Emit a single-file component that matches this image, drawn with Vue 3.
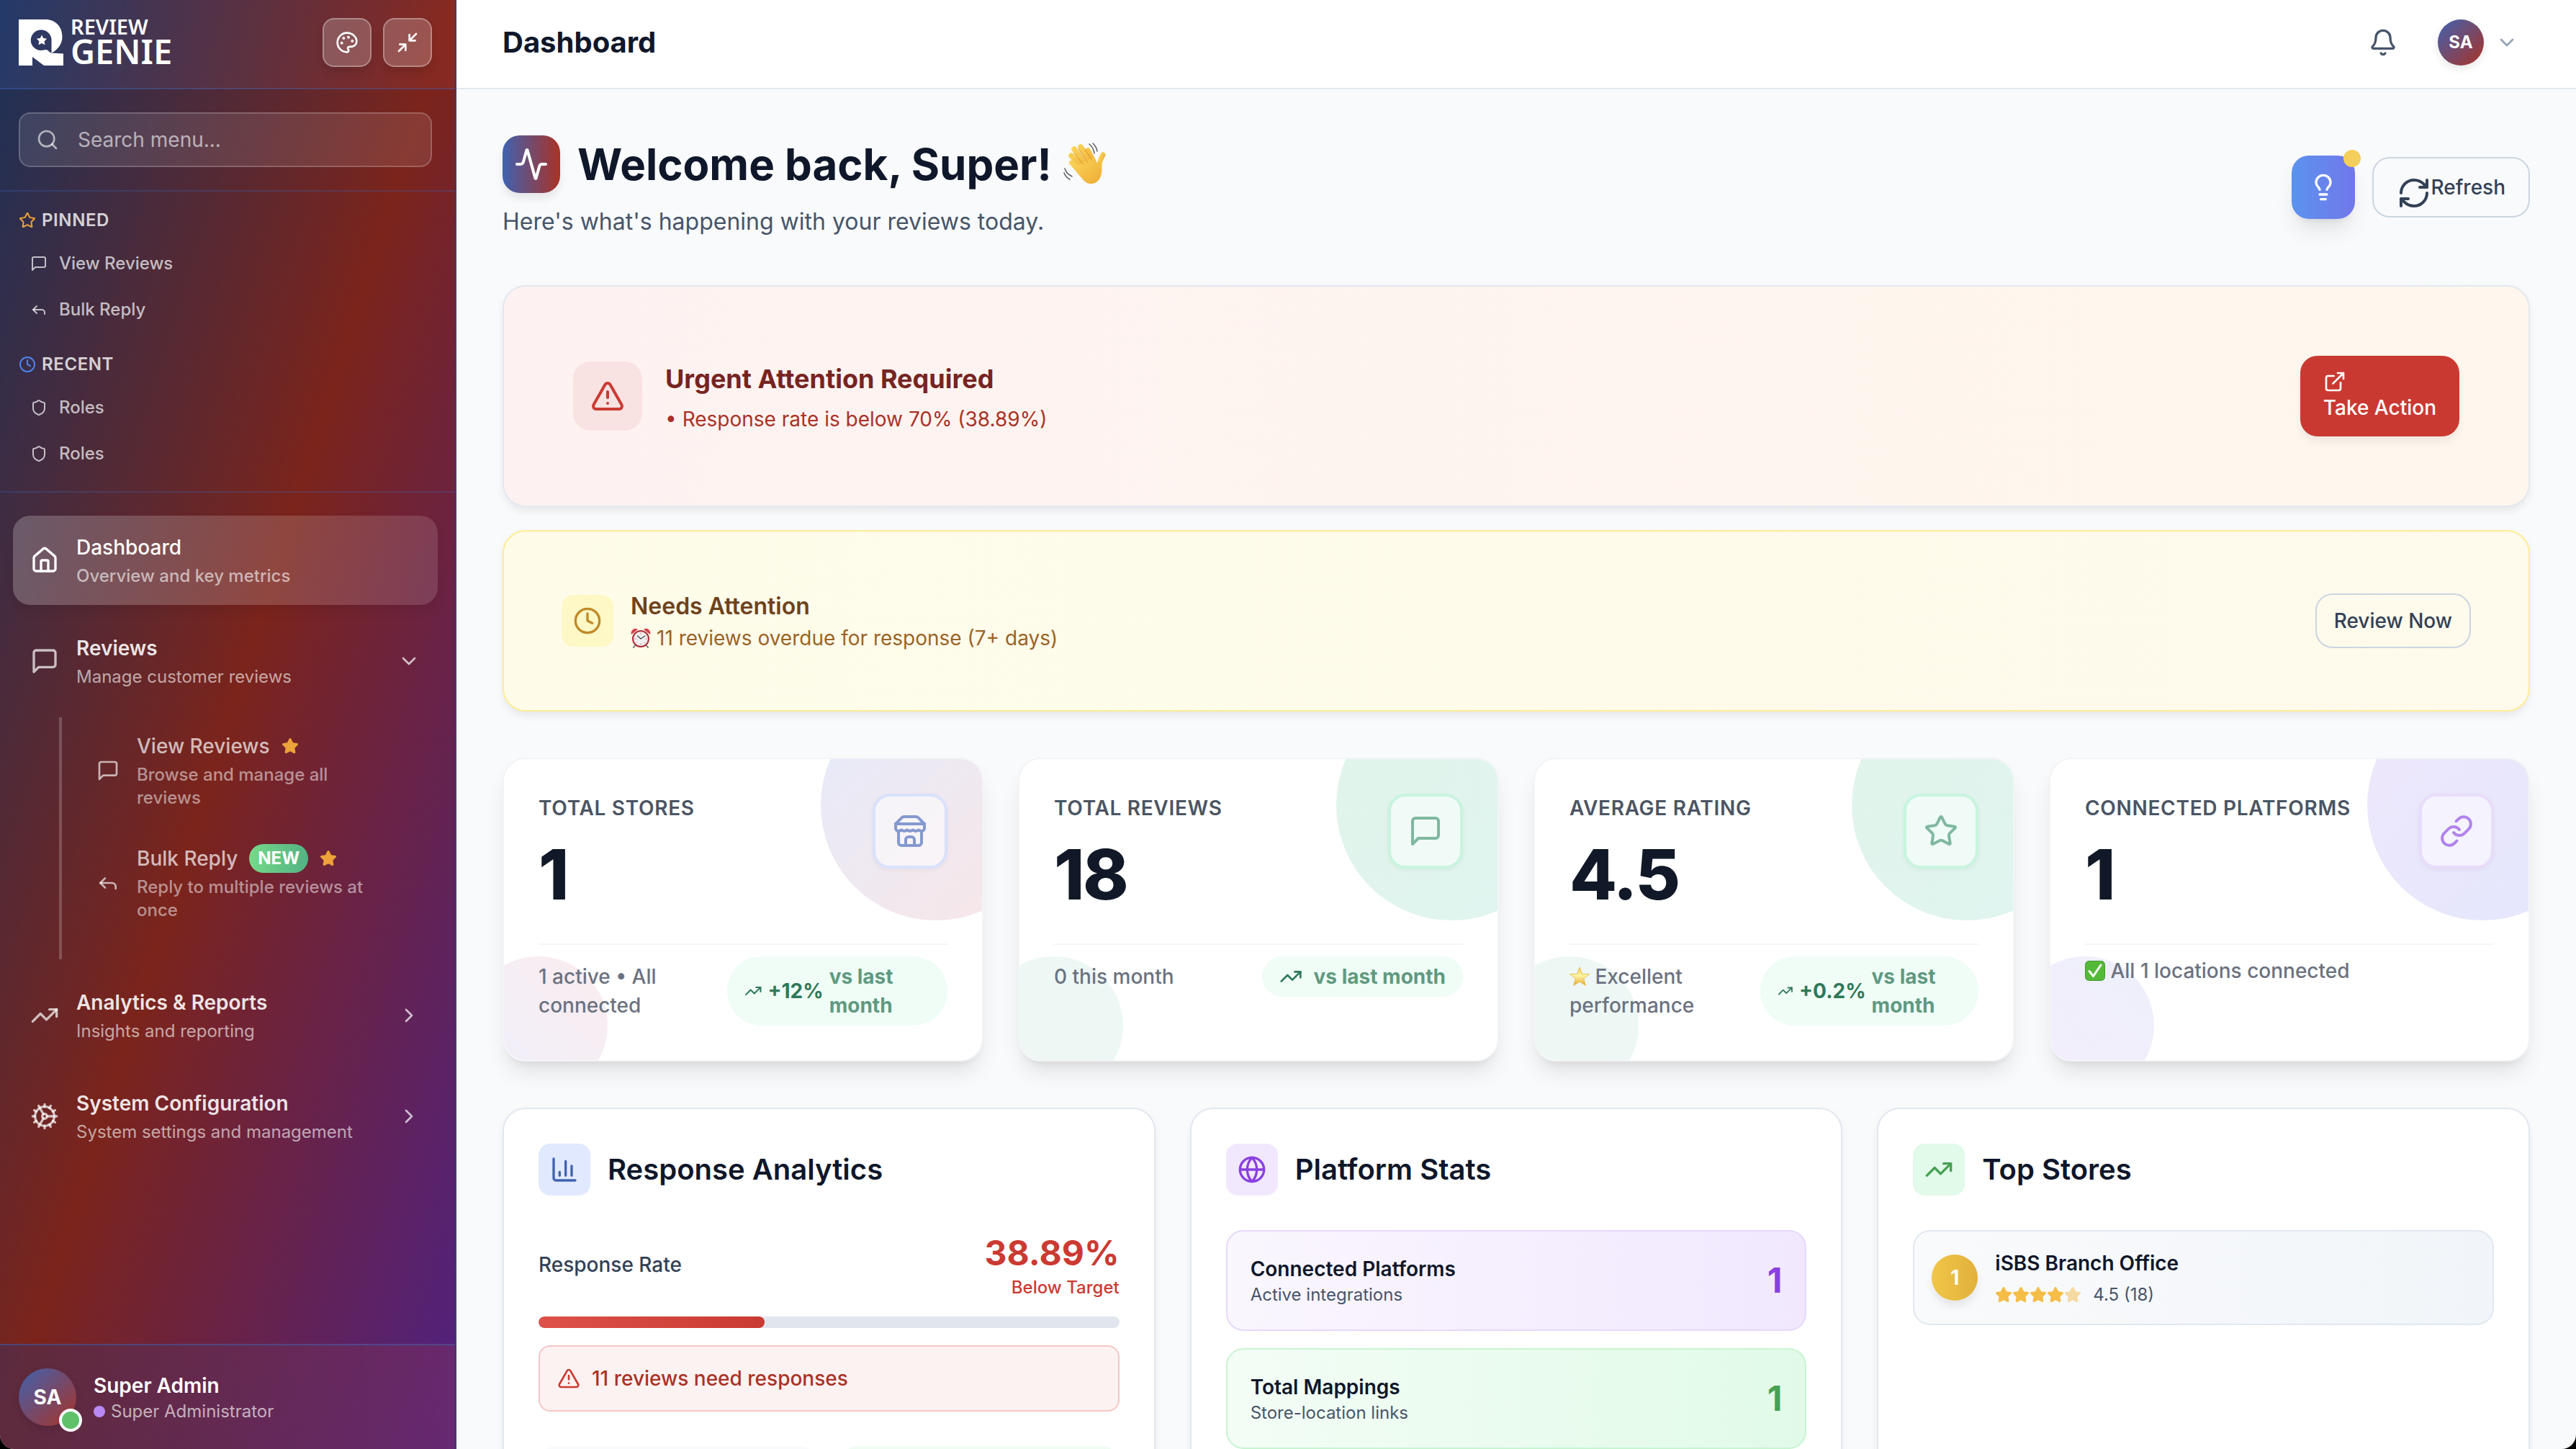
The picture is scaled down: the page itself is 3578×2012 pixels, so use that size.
<script setup>
import { h, ref } from 'vue'

const glyphs = {
  palette: '<circle cx="13.5" cy="6.5" r=".5" fill="currentColor"/><circle cx="17.5" cy="10.5" r=".5" fill="currentColor"/><circle cx="8.5" cy="7.5" r=".5" fill="currentColor"/><circle cx="6.5" cy="12.5" r=".5" fill="currentColor"/><path d="M12 2C6.5 2 2 6.5 2 12s4.5 10 10 10c.926 0 1.648-.746 1.648-1.688 0-.437-.18-.835-.437-1.125-.29-.289-.438-.652-.438-1.125a1.64 1.64 0 0 1 1.668-1.668h1.996c3.051 0 5.555-2.503 5.555-5.554C21.965 6.012 17.461 2 12 2z"/>',
  minimize: '<path d="M4 14h6v6M20 10h-6V4M14 10l7-7M3 21l7-7"/>',
  search: '<circle cx="11" cy="11" r="8"/><path d="m21 21-4.3-4.3"/>',
  star: '<path d="M11.525 2.295a.53.53 0 0 1 .95 0l2.31 4.679a2.123 2.123 0 0 0 1.595 1.16l5.166.756a.53.53 0 0 1 .294.904l-3.736 3.638a2.123 2.123 0 0 0-.611 1.878l.882 5.14a.53.53 0 0 1-.771.56l-4.618-2.428a2.122 2.122 0 0 0-1.973 0L6.396 21.01a.53.53 0 0 1-.77-.56l.881-5.139a2.122 2.122 0 0 0-.611-1.879L2.16 9.795a.53.53 0 0 1 .294-.906l5.165-.755a2.122 2.122 0 0 0 1.597-1.16z"/>',
  message: '<path d="M21 15a2 2 0 0 1-2 2H7l-4 4V5a2 2 0 0 1 2-2h14a2 2 0 0 1 2 2z"/>',
  reply: '<path d="M9 17l-5-5 5-5"/><path d="M20 18v-2a4 4 0 0 0-4-4H4"/>',
  clock: '<circle cx="12" cy="12" r="10"/><path d="M12 6v6l4 2"/>',
  shield: '<path d="M20 13c0 5-3.5 7.5-7.66 8.95a1 1 0 0 1-.67-.01C7.5 20.5 4 18 4 13V6a1 1 0 0 1 1-1c2 0 4.5-1.2 6.24-2.72a1.17 1.17 0 0 1 1.52 0C14.51 3.81 17 5 19 5a1 1 0 0 1 1 1z"/>',
  home: '<path d="M15 21v-8a1 1 0 0 0-1-1h-4a1 1 0 0 0-1 1v8"/><path d="M3 10a2 2 0 0 1 .709-1.528l7-5.999a2 2 0 0 1 2.582 0l7 5.999A2 2 0 0 1 21 10v9a2 2 0 0 1-2 2H5a2 2 0 0 1-2-2z"/>',
  trend: '<path d="M22 7l-8.500 8.500-5-5L2 17"/><path d="M16 7h6v6"/>',
  cog: '<path d="M12 20a8 8 0 1 0 0-16 8 8 0 0 0 0 16Z"/><path d="M12 14a2 2 0 1 0 0-4 2 2 0 0 0 0 4Z"/><path d="M12 2v2M12 22v-2M17 20.66l-1-1.73M11 10.27 7 3.34M20.66 17l-1.73-1M3.34 7l1.73 1M14 12h8M2 12h2M20.66 7l-1.73 1M3.34 17l1.73-1M17 3.34l-1 1.73M11 13.73l-4 6.930"/>',
  down: '<path d="m6 9 6 6 6-6"/>',
  right: '<path d="m9 18 6-6-6-6"/>',
  bell: '<path d="M10.268 21a2 2 0 0 0 3.464 0"/><path d="M3.262 15.326A1 1 0 0 0 4 17h16a1 1 0 0 0 .74-1.673C19.41 13.956 18 12.499 18 8A6 6 0 0 0 6 8c0 4.499-1.411 5.956-2.738 7.326"/>',
  activity: '<path d="M22 12h-2.480a2 2 0 0 0-1.930 1.460l-2.350 8.360a.25.25 0 0 1-.48 0L9.240 2.180a.25.25 0 0 0-.48 0l-2.350 8.360A2 2 0 0 1 4.490 12H2"/>',
  bulb: '<path d="M15 14c.2-1 .7-1.700 1.500-2.500 1-.9 1.500-2.200 1.500-3.500A6 6 0 0 0 6 8c0 1 .2 2.200 1.500 3.500.7.7 1.300 1.500 1.500 2.500"/><path d="M9 18h6M10 22h4"/>',
  refresh: '<path d="M3 12a9 9 0 0 1 9-9 9.750 9.750 0 0 1 6.740 2.740L21 8"/><path d="M21 3v5h-5"/><path d="M21 12a9 9 0 0 1-9 9 9.750 9.750 0 0 1-6.740-2.740L3 16"/><path d="M8 16H3v5"/>',
  external: '<path d="M15 3h6v6M10 14 21 3"/><path d="M18 13v6a2 2 0 0 1-2 2H5a2 2 0 0 1-2-2V8a2 2 0 0 1 2-2h6"/>',
  alert: '<path d="m21.730 18-8-14a2 2 0 0 0-3.480 0l-8 14A2 2 0 0 0 4 21h16a2 2 0 0 0 1.730-3"/><path d="M12 9v4M12 17h.01"/>',
  store: '<path d="m2 7 4.410-4.410A2 2 0 0 1 7.830 2h8.340a2 2 0 0 1 1.420.59L22 7"/><path d="M4 12v8a2 2 0 0 0 2 2h12a2 2 0 0 0 2-2v-8"/><path d="M15 22v-4a2 2 0 0 0-2-2h-2a2 2 0 0 0-2 2v4"/><path d="M2 7h20"/><path d="M22 7v3a2 2 0 0 1-2 2a2.700 2.700 0 0 1-1.590-.63.7.7 0 0 0-.82 0A2.700 2.700 0 0 1 16 12a2.700 2.700 0 0 1-1.590-.63.7.7 0 0 0-.82 0A2.700 2.700 0 0 1 12 12a2.700 2.700 0 0 1-1.590-.63.7.7 0 0 0-.82 0A2.700 2.700 0 0 1 8 12a2.700 2.700 0 0 1-1.590-.63.7.7 0 0 0-.82 0A2.700 2.700 0 0 1 4 12a2 2 0 0 1-2-2V7"/>',
  link: '<path d="M10 13a5 5 0 0 0 7.540.54l3-3a5 5 0 0 0-7.070-7.070l-1.720 1.710"/><path d="M14 11a5 5 0 0 0-7.540-.54l-3 3a5 5 0 0 0 7.070 7.070l1.710-1.710"/>',
  chart: '<path d="M3 3v16a2 2 0 0 0 2 2h16"/><path d="M18 17V9M13 17V5M8 17v-3"/>',
  globe: '<circle cx="12" cy="12" r="10"/><path d="M12 2a14.500 14.500 0 0 0 0 20 14.500 14.500 0 0 0 0-20M2 12h20"/>'
}

const Icon = (props) =>
  h('svg', {
    viewBox: '0 0 24 24',
    width: props.size,
    height: props.size,
    fill: props.filled ? 'currentColor' : 'none',
    stroke: 'currentColor',
    'stroke-width': 2,
    'stroke-linecap': 'round',
    'stroke-linejoin': 'round',
    'aria-hidden': 'true',
    innerHTML: glyphs[props.name]
  })
Icon.props = { name: String, size: Number, filled: Boolean }

const query = ref('')

const pinned = [
  { icon: 'message', label: 'View Reviews' },
  { icon: 'reply', label: 'Bulk Reply' }
]
const recent = [
  { icon: 'shield', label: 'Roles' },
  { icon: 'shield', label: 'Roles' }
]
const subItems = [
  { icon: 'message', label: 'View Reviews', note: 'Browse and manage all reviews' },
  { icon: 'reply', label: 'Bulk Reply', note: 'Reply to multiple reviews at once', badge: 'NEW' }
]
const groups = [
  { icon: 'trend', label: 'Analytics & Reports', note: 'Insights and reporting' },
  { icon: 'cog', label: 'System Configuration', note: 'System settings and management' }
]
const stats = [
  { tone: 'brand', icon: 'store', label: 'Total Stores', value: '1', note: '1 active • All connected', change: '+12%', trend: true },
  { tone: 'green', icon: 'message', label: 'Total Reviews', value: '18', note: '0 this month', change: '', trend: true },
  { tone: 'green', icon: 'star', label: 'Average Rating', value: '4.5', note: 'Excellent performance', emoji: 'star', change: '+0.2%', trend: true },
  { tone: 'violet', icon: 'link', label: 'Connected Platforms', value: '1', note: 'All 1 locations connected', emoji: 'check' }
]
const platformRows = [
  { tone: 'violet', label: 'Connected Platforms', note: 'Active integrations', value: 1 },
  { tone: 'green', label: 'Total Mappings', note: 'Store-location links', value: 1 }
]
const responseRate = 38.89
</script>

<template>
  <div class="shell">
    <aside class="sidebar">
      <div class="brand-bar">
        <a href="#" class="logo" aria-label="Review Genie">
          <svg class="logo-mark" viewBox="0 0 62 64" width="62" height="64" aria-hidden="true">
            <path fill="#fff" fill-rule="evenodd" d="M0 0H37C51 0 60.500 10 60.500 24C60.500 34 54.500 42 45.500 46.500L62 47.500V64H35L19 52V64H0ZM31 14.500A14.200 14.200 0 0 0 31 43C34 43 35.500 42 38 42C41 42 42 46 45.500 46.500V28.500A14.300 14.300 0 0 0 31 14.500Z" />
            <path fill="#fff" d="M32 21.500l2.200 4.600 5 .7-3.600 3.500.9 5-4.500-2.400-4.500 2.400.9-5-3.600-3.500 5-.7z" />
          </svg>
          <span class="logo-words"><span class="logo-top">REVIEW</span><span class="logo-bottom">GENIE</span></span>
        </a>
        <div class="brand-actions">
          <button type="button" class="glass-btn" aria-label="Theme"><Icon name="palette" :size="32" /></button>
          <button type="button" class="glass-btn" aria-label="Collapse menu"><Icon name="minimize" :size="32" /></button>
        </div>
      </div>

      <div class="search-area">
        <label class="search-box">
          <Icon name="search" :size="32" />
          <input v-model="query" type="text" placeholder="Search menu..." aria-label="Search menu" />
        </label>
      </div>

      <div class="quick">
        <section>
          <h2 class="quick-title"><Icon name="star" :size="24" class="amber" />PINNED</h2>
          <ul class="quick-list">
            <li v-for="(p, i) in pinned" :key="i"><a href="#"><Icon :name="p.icon" :size="24" />{{ p.label }}</a></li>
          </ul>
        </section>
        <section>
          <h2 class="quick-title"><Icon name="clock" :size="24" class="blue" />RECENT</h2>
          <ul class="quick-list">
            <li v-for="(p, i) in recent" :key="i"><a href="#"><Icon :name="p.icon" :size="24" />{{ p.label }}</a></li>
          </ul>
        </section>
      </div>

      <nav class="nav">
        <a href="#" class="nav-item active" aria-current="page">
          <Icon name="home" :size="40" />
          <span class="nav-text"><span class="nav-label">Dashboard</span><span class="nav-note">Overview and key metrics</span></span>
        </a>
        <button type="button" class="nav-item" aria-expanded="true">
          <Icon name="message" :size="40" />
          <span class="nav-text"><span class="nav-label">Reviews</span><span class="nav-note">Manage customer reviews</span></span>
          <Icon name="down" :size="32" />
        </button>
        <div class="subnav">
          <a v-for="s in subItems" :key="s.label" href="#" class="sub-item">
            <Icon :name="s.icon" :size="32" />
            <span class="nav-text">
              <span class="sub-label">{{ s.label }}<span v-if="s.badge" class="badge">{{ s.badge }}</span><Icon name="star" :size="24" filled class="amber" /></span>
              <span class="sub-note">{{ s.note }}</span>
            </span>
          </a>
        </div>
        <button v-for="g in groups" :key="g.label" type="button" class="nav-item" aria-expanded="false">
          <Icon :name="g.icon" :size="40" />
          <span class="nav-text"><span class="nav-label">{{ g.label }}</span><span class="nav-note">{{ g.note }}</span></span>
          <Icon name="right" :size="32" />
        </button>
      </nav>

      <div class="account">
        <div class="avatar large">SA<span class="online"></span></div>
        <div>
          <div class="account-name">Super Admin</div>
          <div class="account-role"><span class="role-dot"></span>Super Administrator</div>
        </div>
      </div>
    </aside>

    <div class="page">
      <header class="topbar">
        <div class="topbar-title">Dashboard</div>
        <div class="topbar-right">
          <button type="button" class="bare bell" aria-label="Notifications"><Icon name="bell" :size="40" /></button>
          <button type="button" class="bare user" aria-label="Account menu">
            <span class="avatar">SA</span>
            <Icon name="down" :size="32" />
          </button>
        </div>
      </header>

      <main class="content">
        <div class="welcome">
          <div>
            <h1 class="welcome-title">
              <span class="welcome-icon"><Icon name="activity" :size="48" /></span>
              <span>Welcome back, Super!</span>
              <svg class="wave" viewBox="0 0 60 60" width="60" height="60" role="img" aria-label="Waving hand">
                <defs>
                  <linearGradient id="skin" x1="0" y1="0" x2="1" y2="1"><stop offset="0" stop-color="#fbd75c" /><stop offset="1" stop-color="#efac35" /></linearGradient>
                </defs>
                <g stroke="url(#skin)" stroke-linecap="round" fill="none">
                  <path stroke-width="7.500" d="M25 34L11 18M30 30L15 9M37 27L24 6M42 27L34 11" />
                  <path stroke-width="7" d="M49 36C49 29 51 24 55 17" />
                </g>
                <path fill="url(#skin)" d="M21 31L41 21C43 24 45 28 47 28L53 26C54 38 54 47 48 53C41 60 32 58 26 50L8 29C7 25 11 23 14 26Z" />
                <path d="M28 31L15 15M34 28L21 9M40 25L30 9" fill="none" stroke="#dc9328" stroke-width="1" stroke-linecap="round" />
                <g fill="none" stroke="#5c5c5c" stroke-width="1.500" stroke-linecap="round">
                  <path d="M36 2Q42 7 43 15M41 1Q46 6 47 12M2 36Q4 43 12 47M1 42Q3 48 9 51" />
                </g>
              </svg>
            </h1>
            <p class="welcome-sub">Here's what's happening with your reviews today.</p>
          </div>
          <div class="welcome-actions">
            <button type="button" class="tip-btn" aria-label="Tips"><Icon name="bulb" :size="40" /><span class="tip-dot"></span></button>
            <button type="button" class="outline-btn refresh"><Icon name="refresh" :size="48" />Refresh</button>
          </div>
        </div>

        <div class="alerts">
          <section class="alert urgent">
            <span class="alert-icon"><Icon name="alert" :size="48" /></span>
            <div class="alert-text">
              <h2>Urgent Attention Required</h2>
              <p>• Response rate is below 70% (38.89%)</p>
            </div>
            <button type="button" class="action-btn"><Icon name="external" :size="32" />Take Action</button>
          </section>
          <section class="alert notice">
            <span class="alert-icon"><Icon name="clock" :size="40" /></span>
            <div class="alert-text">
              <h2>Needs Attention</h2>
              <p>
                <svg class="inline-emoji" viewBox="0 0 28 28" width="28" height="28" role="img" aria-label="Alarm clock">
                  <path d="M8 22l-4 5M20 22l4 5" stroke="#777" stroke-width="2" stroke-linecap="round" />
                  <path d="M1 9A6 6 0 0 1 10 2Z M27 9A6 6 0 0 0 18 2Z" fill="#d5424b" />
                  <circle cx="14" cy="15" r="11" fill="#f1efef" stroke="#a92f3a" stroke-width="2" />
                  <path d="M14 15L9.500 11M14 15L20 11" stroke="#444" stroke-width="1.200" stroke-linecap="round" />
                  <path d="M14 6.500v2M14 21.500v2M5.500 15h2M20.500 15h2M8 21l1-1M19 20l1 1" stroke="#c77b80" stroke-width="1" />
                </svg>
                <span>11 reviews overdue for response (7+ days)</span>
              </p>
            </div>
            <button type="button" class="outline-btn">Review Now</button>
          </section>
        </div>

        <div class="stats">
          <article v-for="s in stats" :key="s.label" class="stat" :class="s.tone">
            <span class="blob blob-top"></span>
            <span class="blob blob-bottom"></span>
            <div class="stat-head">
              <div>
                <h3 class="stat-label">{{ s.label }}</h3>
                <div class="stat-value">{{ s.value }}</div>
              </div>
              <span class="stat-icon"><Icon :name="s.icon" :size="48" /></span>
            </div>
            <div class="stat-foot">
              <div class="stat-note">
                <svg v-if="s.emoji === 'star'" class="text-emoji" viewBox="0 0 28 28" width="28" height="28" role="img" aria-label="Star">
                  <defs><linearGradient id="gold" x1="0" y1="0" x2="0" y2="1"><stop offset="0" stop-color="#f6c945" /><stop offset=".45" stop-color="#fdf6a8" /><stop offset="1" stop-color="#eda62c" /></linearGradient></defs>
                  <path fill="url(#gold)" stroke="#e9b23c" stroke-width=".8" stroke-linejoin="round" d="M14 1l3.500 9.300 9.900.4-7.700 6.200 2.600 9.600-8.300-5.400-8.300 5.400 2.600-9.600L.6 10.700l9.900-.4z" />
                </svg>
                <svg v-if="s.emoji === 'check'" class="text-emoji" viewBox="0 0 28 28" width="28" height="28" role="img" aria-label="Done">
                  <rect x=".5" y=".5" width="27" height="27" rx="5" fill="#54b936" stroke="#3f9a35" />
                  <path d="M6 14.500l5.500 7L22 6" fill="none" stroke="#fff" stroke-width="3" stroke-linecap="round" stroke-linejoin="round" />
                </svg>
                {{ s.note }}
              </div>
              <div v-if="s.trend" class="pill" :class="{ spaced: !s.change }">
                <Icon name="trend" :size="32" />
                <span v-if="s.change">{{ s.change }}</span>
                <span class="pill-note">vs last month</span>
              </div>
            </div>
          </article>
        </div>

        <div class="panels">
          <section class="panel">
            <h2 class="panel-title"><span class="panel-icon brand"><Icon name="chart" :size="40" /></span>Response Analytics</h2>
            <div class="rate">
              <span class="rate-label">Response Rate</span>
              <div class="rate-side">
                <div class="rate-value">{{ responseRate }}%</div>
                <div class="rate-state">Below Target</div>
              </div>
            </div>
            <div class="bar" role="progressbar" aria-label="Response rate" :aria-valuenow="responseRate" aria-valuemin="0" aria-valuemax="100">
              <div class="bar-fill" :style="{ width: responseRate + '%' }"></div>
            </div>
            <div class="need"><Icon name="alert" :size="32" /><span>11 reviews need responses</span></div>
            <div class="tiles"><div class="tile gray"></div><div class="tile mint"></div></div>
          </section>

          <section class="panel">
            <h2 class="panel-title"><span class="panel-icon violet"><Icon name="globe" :size="40" /></span>Platform Stats</h2>
            <div class="rows">
              <div v-for="r in platformRows" :key="r.label" class="row" :class="r.tone">
                <div>
                  <div class="row-label">{{ r.label }}</div>
                  <div class="row-note">{{ r.note }}</div>
                </div>
                <div class="row-value">{{ r.value }}</div>
              </div>
            </div>
          </section>

          <section class="panel">
            <h2 class="panel-title"><span class="panel-icon green"><Icon name="trend" :size="40" /></span>Top Stores</h2>
            <div class="store">
              <span class="rank">1</span>
              <div>
                <div class="row-label">iSBS Branch Office</div>
                <div class="rating">
                  <span class="rating-stars"><Icon v-for="n in 5" :key="n" name="star" :size="24" filled :class="{ faded: n === 5 }" /></span>
                  <span>4.5 (18)</span>
                </div>
              </div>
            </div>
          </section>
        </div>
      </main>
    </div>
  </div>
</template>

<style>
html,
body {
  background: #000;
}
</style>

<style scoped>
.shell,
.shell * {
  box-sizing: border-box;
}
.shell {
  display: flex;
  height: 100vh;
  overflow: hidden;
  border-radius: 0 0 20px 20px;
  background: #f9fafc;
  color: #0f172a;
  font-family: Inter, "Liberation Sans", sans-serif;
  font-size: 28px;
  line-height: 40px;
}
h1, h2, h3, p, ul {
  margin: 0;
  padding: 0;
}
ul {
  list-style: none;
}
a {
  color: inherit;
  text-decoration: none;
}
button {
  margin: 0;
  border: 0;
  background: none;
  color: inherit;
  font: inherit;
  cursor: pointer;
}
svg {
  display: block;
}

/* Sidebar */
.sidebar {
  display: flex;
  flex: none;
  flex-direction: column;
  width: 634px;
  border-right: 2px solid #3a3d6e;
  background: linear-gradient(to bottom right, #1c3158, #7b241c, #4f2181);
  color: #fff;
}
.brand-bar {
  display: flex;
  align-items: center;
  justify-content: space-between;
  height: 124px;
  padding: 0 32px 4px 26px;
  border-bottom: 2px solid rgba(64, 98, 176, 0.4);
  background: linear-gradient(to right, rgba(64, 98, 176, 0.2), rgba(185, 60, 50, 0.2));
}
.logo {
  display: flex;
  gap: 10px;
  align-items: center;
}
.logo-words {
  display: flex;
  flex-direction: column;
  font-family: "Noto Sans", sans-serif;
  font-weight: 600;
}
.logo-top {
  font-size: 29px;
  line-height: 24px;
}
.logo-bottom {
  font-size: 47px;
  line-height: 44px;
}
.brand-actions {
  display: flex;
  gap: 16px;
}
.glass-btn {
  display: flex;
  align-items: center;
  justify-content: center;
  width: 68px;
  height: 68px;
  padding: 0;
  border: 2px solid rgba(255, 255, 255, 0.3);
  border-radius: 16px;
  background: rgba(255, 255, 255, 0.2);
  box-shadow: 0 8px 12px rgba(0, 0, 0, 0.1);
}
.search-area {
  padding: 32px 32px 32px 26px;
  border-bottom: 2px solid rgba(64, 98, 176, 0.3);
}
.search-box {
  display: flex;
  gap: 26px;
  align-items: center;
  height: 76px;
  padding: 0 22px;
  border: 2px solid rgba(255, 255, 255, 0.2);
  border-radius: 16px;
  background: rgba(255, 255, 255, 0.1);
  color: rgba(255, 255, 255, 0.6);
}
.search-box input {
  flex: 1;
  min-width: 0;
  padding: 0;
  border: 0;
  outline: 0;
  background: none;
  color: #fff;
  font: inherit;
}
.search-box input::placeholder {
  color: rgba(255, 255, 255, 0.6);
  opacity: 1;
}
.quick {
  display: flex;
  flex-direction: column;
  gap: 32px;
  padding: 24px 32px 24px 26px;
  border-bottom: 2px solid rgba(64, 98, 176, 0.3);
}
.quick-title {
  display: flex;
  gap: 8px;
  align-items: center;
  margin-bottom: 16px;
  color: rgba(255, 255, 255, 0.8);
  font-size: 24px;
  font-weight: 600;
  letter-spacing: 0.025em;
  line-height: 32px;
}
.amber {
  color: #eda23a;
}
.blue {
  color: #4f83f0;
}
.quick-list {
  display: flex;
  flex-direction: column;
  gap: 8px;
}
.quick-list a {
  display: flex;
  gap: 16px;
  align-items: center;
  height: 56px;
  padding: 0 16px;
  color: rgba(255, 255, 255, 0.7);
  font-size: 24px;
  font-weight: 500;
}
.nav {
  display: flex;
  flex: 1;
  flex-direction: column;
  gap: 16px;
  min-height: 0;
  padding: 32px 24px 32px 18px;
}
.nav-item {
  display: flex;
  gap: 24px;
  align-items: center;
  padding: 24px;
  border-radius: 24px;
  color: rgba(255, 255, 255, 0.7);
  text-align: left;
}
.nav-item.active {
  background: linear-gradient(to right, rgba(255, 255, 255, 0.22), rgba(255, 255, 255, 0.12));
  box-shadow: 0 8px 16px rgba(0, 0, 0, 0.08);
  color: #fff;
}
.nav-text {
  display: flex;
  flex: 1;
  flex-direction: column;
  gap: 4px;
  min-width: 0;
}
.nav-label {
  color: rgba(255, 255, 255, 0.9);
  font-weight: 600;
}
.active .nav-label {
  color: #fff;
  font-weight: 500;
}
.nav-note {
  color: rgba(255, 255, 255, 0.6);
  font-size: 24px;
  line-height: 32px;
}
.active .nav-note {
  font-weight: 500;
}
.subnav {
  display: flex;
  flex-direction: column;
  gap: 8px;
  margin-left: 64px;
  padding: 0 48px 32px 24px;
  border-left: 4px solid rgba(255, 255, 255, 0.2);
}
.sub-item {
  display: flex;
  gap: 24px;
  align-items: center;
  padding: 20px 24px;
  color: rgba(255, 255, 255, 0.65);
}
.sub-label {
  display: flex;
  gap: 16px;
  align-items: center;
  color: rgba(255, 255, 255, 0.7);
  font-weight: 500;
}
.sub-note {
  color: rgba(255, 255, 255, 0.5);
  font-size: 24px;
  font-weight: 500;
  line-height: 32px;
}
.badge {
  padding: 4px 12px;
  border-radius: 20px;
  background: linear-gradient(to right, #76d989, #52b283);
  color: #fff;
  font-size: 24px;
  font-weight: 700;
  line-height: 32px;
}
.account {
  display: flex;
  gap: 24px;
  align-items: center;
  padding: 32px 26px;
  border-top: 2px solid rgba(64, 98, 176, 0.5);
  background: linear-gradient(to right, rgba(48, 52, 112, 0.4), rgba(169, 60, 70, 0.25));
}
.avatar {
  position: relative;
  display: flex;
  flex: none;
  align-items: center;
  justify-content: center;
  width: 64px;
  height: 64px;
  border-radius: 50%;
  background: linear-gradient(135deg, #4062b0, #a93226);
  box-shadow: 0 4px 12px rgba(0, 0, 0, 0.1);
  color: #fff;
  font-size: 24px;
  font-weight: 700;
  line-height: 32px;
}
.avatar.large {
  width: 80px;
  height: 80px;
  font-size: 28px;
}
.online {
  position: absolute;
  right: -8px;
  bottom: -8px;
  width: 32px;
  height: 32px;
  border: 4px solid #fff;
  border-radius: 50%;
  background: #5fc16a;
}
.account-name {
  font-weight: 600;
}
.account-role {
  display: flex;
  gap: 8px;
  align-items: center;
  color: rgba(255, 255, 255, 0.65);
  font-size: 24px;
  line-height: 32px;
}
.role-dot {
  width: 16px;
  height: 16px;
  border-radius: 50%;
  background: #b78af5;
}

/* Top bar */
.page {
  display: flex;
  flex: 1;
  flex-direction: column;
  min-width: 0;
}
.topbar {
  display: flex;
  flex: none;
  align-items: center;
  justify-content: space-between;
  height: 124px;
  padding: 0 80px 4px 64px;
  border-bottom: 2px solid #e2e8f0;
  background: #fff;
}
.topbar-title {
  font-size: 40px;
  font-weight: 700;
  line-height: 56px;
}
.topbar-right {
  display: flex;
  gap: 56px;
  align-items: center;
}
.bare {
  display: flex;
  padding: 0;
}
.bell {
  color: #475569;
}
.user {
  gap: 16px;
  align-items: center;
  color: #94a3b8;
}

/* Content */
.content {
  flex: 1;
  min-height: 0;
  padding: 64px;
  overflow-y: auto;
  scrollbar-width: none;
}
.welcome {
  display: flex;
  align-items: center;
  justify-content: space-between;
}
.welcome-title {
  display: flex;
  align-items: center;
  font-size: 60px;
  font-weight: 700;
  line-height: 80px;
}
.welcome-icon {
  display: flex;
  align-items: center;
  justify-content: center;
  width: 80px;
  height: 80px;
  margin-right: 24px;
  border-radius: 24px;
  background: linear-gradient(to right, #4062b0, #a93226);
  box-shadow: 0 8px 12px rgba(0, 0, 0, 0.08);
  color: #fff;
}
.wave {
  margin-left: 16px;
}
.welcome-sub {
  margin-top: 16px;
  color: #475569;
  font-size: 32px;
  line-height: 48px;
}
.welcome-actions {
  display: flex;
  gap: 24px;
  align-items: center;
}
.tip-btn {
  position: relative;
  display: flex;
  align-items: center;
  justify-content: center;
  width: 88px;
  height: 88px;
  padding: 0;
  border-radius: 24px;
  background: linear-gradient(to right, #5b93ef, #7277ea);
  box-shadow: 0 20px 30px -6px rgba(0, 0, 0, 0.1), 0 8px 12px -8px rgba(0, 0, 0, 0.1);
  color: #fff;
}
.tip-dot {
  position: absolute;
  top: -8px;
  right: -8px;
  width: 24px;
  height: 24px;
  border-radius: 50%;
  background: #f4cf5b;
}
.outline-btn {
  display: flex;
  align-items: center;
  height: 76px;
  padding: 0 24px;
  border: 2px solid #cbd5e1;
  border-radius: 24px;
  color: #334155;
  font-weight: 500;
}
.refresh {
  height: 84px;
  padding: 0 32px;
}
.refresh svg {
  margin-top: 16px;
}

/* Alerts */
.alerts {
  display: flex;
  flex-direction: column;
  gap: 32px;
  margin-top: 64px;
}
.alert {
  display: flex;
  align-items: center;
  border: 2px solid #e2e8f0;
  border-radius: 32px;
  box-shadow: 0 8px 12px -2px rgba(0, 0, 0, 0.05), 0 4px 16px rgba(0, 0, 0, 0.03);
}
.alert-icon {
  display: flex;
  align-items: center;
  justify-content: center;
}
.alert-text {
  flex: 1;
}
.urgent {
  gap: 32px;
  padding: 96px;
  background: linear-gradient(to right, #fdf2f1, #fff7ed);
}
.urgent .alert-icon {
  width: 96px;
  height: 96px;
  border-radius: 24px;
  background: #f9e2e2;
  color: #cb3a32;
}
.urgent h2 {
  color: #762422;
  font-size: 36px;
  font-weight: 700;
  line-height: 56px;
}
.urgent p {
  margin-top: 8px;
  color: #a93226;
}
.action-btn {
  display: flex;
  flex-direction: column;
  align-items: flex-start;
  padding: 20px 32px;
  border-radius: 24px;
  background: #ca3931;
  box-shadow: 0 8px 12px rgba(0, 0, 0, 0.06);
  color: #fff;
  font-weight: 500;
}
.notice {
  gap: 24px;
  padding: 80px;
  border-color: #fdec95;
  background: linear-gradient(to right, #fefce9, #fefaec);
}
.notice .alert-icon {
  width: 72px;
  height: 72px;
  border-radius: 16px;
  background: #fdf8c6;
  color: #c08b28;
}
.notice h2 {
  color: #6e421c;
  font-size: 32px;
  font-weight: 600;
  line-height: 48px;
}
.notice p {
  display: flex;
  gap: 8px;
  align-items: center;
  color: #9a6426;
}

/* Stat cards */
.stats {
  display: grid;
  grid-template-columns: repeat(4, minmax(0, 1fr));
  gap: 48px;
  margin-top: 64px;
}
.stat {
  position: relative;
  padding: 48px;
  overflow: hidden;
  border: 2px solid #f3f4f6;
  border-radius: 32px;
  background: #fff;
  box-shadow: 0 20px 30px -6px rgba(0, 0, 0, 0.1), 0 8px 12px -8px rgba(0, 0, 0, 0.1);
}
.blob {
  position: absolute;
  border-radius: 50%;
}
.blob-top {
  top: -96px;
  right: -96px;
  width: 320px;
  height: 320px;
}
.blob-bottom {
  bottom: -48px;
  left: -48px;
  width: 192px;
  height: 192px;
}
.stat.brand .blob-top {
  background: linear-gradient(135deg, #e5ebfb, #f9e6e6);
}
.stat.brand .blob-bottom {
  background: linear-gradient(45deg, #efeffc, #faedef);
}
.stat.green .blob-top {
  background: linear-gradient(135deg, #e0f4ea, #e1f5f1);
}
.stat.green .blob-bottom {
  background: linear-gradient(45deg, #eef7f3, #edf7f5);
}
.stat.violet .blob-top {
  background: linear-gradient(135deg, #efe7fb, #e3e7fd);
}
.stat.violet .blob-bottom {
  background: linear-gradient(45deg, #f4eefb, #eeeffc);
}
.stat-head,
.stat-foot {
  position: relative;
  display: flex;
  justify-content: space-between;
}
.stat-head {
  align-items: flex-start;
  height: 208px;
  border-bottom: 2px solid #f3f4f6;
  height: 210px;
}
.stat-label {
  color: #4b5563;
  font-size: 28px;
  font-weight: 600;
  letter-spacing: 0.025em;
  line-height: 40px;
  text-transform: uppercase;
}
.stat-value {
  margin-top: 16px;
  color: #111827;
  font-size: 96px;
  font-weight: 800;
  letter-spacing: -0.025em;
  line-height: 112px;
}
.stat-icon {
  display: flex;
  flex: none;
  align-items: center;
  justify-content: center;
  width: 104px;
  height: 104px;
  border: 4px solid;
  border-radius: 24px;
  background: rgba(255, 255, 255, 0.5);
  box-shadow: 0 2px 6px rgba(0, 0, 0, 0.05);
}
.brand .stat-icon {
  border-color: #d9e1fb;
  color: #8599cf;
}
.green .stat-icon {
  border-color: #c8f4de;
  color: #7fb8a0;
}
.violet .stat-icon {
  border-color: #e9dcfb;
  color: #b184ec;
}
.stat-foot {
  align-items: center;
  margin-top: 16px;
}
.stat-note {
  color: #6b7280;
  font-weight: 500;
}
.text-emoji {
  display: inline-block;
  vertical-align: -4px;
}
.pill {
  display: flex;
  gap: 8px;
  align-items: center;
  padding: 8px 24px;
  border-radius: 48px;
  background: #effdf6;
  color: #2f7859;
  font-size: 28px;
  font-weight: 700;
}
.pill.spaced {
  gap: 16px;
}
.pill-note {
  opacity: 0.75;
}

/* Panels */
.panels {
  display: grid;
  grid-template-columns: repeat(3, minmax(0, 1fr));
  gap: 48px;
  margin-top: 64px;
}
.panel {
  padding: 48px;
  border: 2px solid #e2e8f0;
  border-radius: 32px;
  background: #fff;
  box-shadow: 0 8px 12px -2px rgba(0, 0, 0, 0.05), 0 4px 16px rgba(0, 0, 0, 0.03);
}
.panel-title {
  display: flex;
  gap: 24px;
  align-items: center;
  margin-bottom: 48px;
  font-size: 40px;
  font-weight: 600;
  line-height: 56px;
}
.panel-icon {
  display: flex;
  align-items: center;
  justify-content: center;
  width: 72px;
  height: 72px;
  border-radius: 16px;
}
.panel-icon.brand {
  background: #e0e9fe;
  color: #4062b0;
}
.panel-icon.violet {
  background: #f1e8fe;
  color: #8a40e0;
}
.panel-icon.green {
  background: #e1fae9;
  color: #47a053;
}
.rate {
  display: flex;
  align-items: center;
  justify-content: space-between;
}
.rate-label {
  color: #334155;
  font-weight: 500;
}
.rate-side {
  color: #cb3a32;
  text-align: right;
}
.rate-value {
  font-size: 48px;
  font-weight: 700;
  line-height: 64px;
}
.rate-state {
  font-size: 24px;
  font-weight: 500;
  line-height: 32px;
}
.bar {
  height: 16px;
  margin-top: 24px;
  overflow: hidden;
  border-radius: 8px;
  background: #e1e6ee;
}
.bar-fill {
  height: 100%;
  border-radius: 8px;
  background: linear-gradient(to right, #dd514a, #c93a32);
}
.need {
  display: flex;
  gap: 16px;
  align-items: center;
  margin-top: 24px;
  padding: 24px;
  border: 2px solid #f5c6c5;
  border-radius: 16px;
  background: #fdf2f2;
  color: #a93226;
  font-weight: 500;
}
.need svg {
  color: #cb3a32;
}
.tiles {
  display: grid;
  grid-template-columns: repeat(2, minmax(0, 1fr));
  gap: 32px;
  margin-top: 48px;
}
.tile {
  height: 144px;
  border-radius: 24px;
}
.tile.gray {
  background: #f8fafb;
}
.tile.mint {
  background: #effcf3;
}
.rows {
  display: flex;
  flex-direction: column;
  gap: 24px;
}
.row {
  display: flex;
  align-items: center;
  justify-content: space-between;
  padding: 32px;
  border: 2px solid;
  border-radius: 24px;
}
.row.violet {
  border-color: #e6d8fb;
  background: linear-gradient(to right, #faf6fe, #f1e8fe);
}
.row.green {
  border-color: #c8f4d2;
  background: linear-gradient(to right, #f3fdf5, #e1fae8);
}
.row-label {
  font-weight: 600;
}
.row-note {
  color: #475569;
  font-size: 24px;
  line-height: 32px;
}
.row-value {
  font-size: 48px;
  font-weight: 700;
  line-height: 64px;
}
.row.violet .row-value {
  color: #8a40e0;
}
.row.green .row-value {
  color: #47a053;
}
.store {
  display: flex;
  gap: 24px;
  align-items: center;
  padding: 24px;
  border: 2px solid #e2e8f0;
  border-radius: 24px;
  background: linear-gradient(to right, #f9fafc, #f1f5f9);
}
.rank {
  display: flex;
  align-items: center;
  justify-content: center;
  width: 64px;
  height: 64px;
  border-radius: 50%;
  background: linear-gradient(to right, #f0c648, #e1b13b);
  box-shadow: 0 8px 12px rgba(0, 0, 0, 0.08);
  color: #fff;
  font-weight: 700;
}
.rating {
  display: flex;
  gap: 16px;
  align-items: center;
  margin-top: 8px;
  color: #475569;
  font-size: 24px;
  line-height: 32px;
}
.rating-stars {
  display: flex;
  color: #f5bd47;
}
.faded {
  opacity: 0.5;
}
</style>
